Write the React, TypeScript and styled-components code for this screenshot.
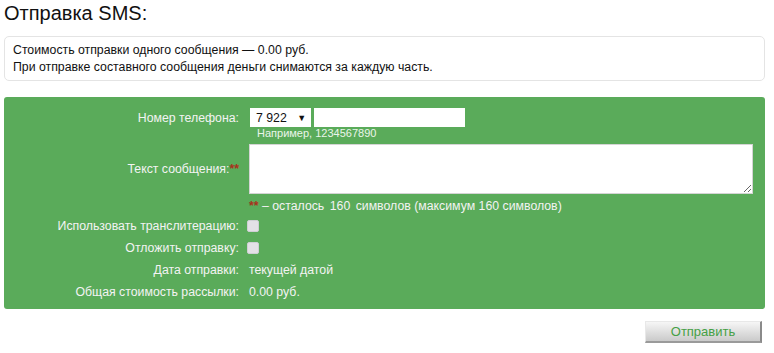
import React from "react";
import styled, { createGlobalStyle } from "styled-components";

const Global = createGlobalStyle`
  html, body { margin: 0; padding: 0; background: #fff; }
  body { font-family: "Liberation Sans", Arial, sans-serif; }
  * { box-sizing: border-box; }
`;

const Page = styled.div`
  width: 761px;
  margin-left: 4px;
  display: flex;
  flex-direction: column;
`;

const Title = styled.h1`
  margin: 0;
  padding-top: 1px;
  font-size: 20px;
  line-height: 24px;
  font-weight: normal;
  color: #111;
`;

const InfoBox = styled.div`
  margin-top: 11px;
  height: 45px;
  border: 1px solid #e4e4e4;
  border-radius: 5px;
  padding: 5px 8px 0 8px;
  font-size: 12.3px;
  line-height: 17px;
  color: #111;
`;

const Panel = styled.div`
  margin-top: 16px;
  background: #5aab5a;
  border-radius: 3px;
  padding: 11px 0 6px 0;
  color: #f3f3f3;
  font-size: 12.3px;
  display: flex;
  flex-direction: column;
`;

const Row = styled.div<{ $h?: number }>`
  display: flex;
  align-items: center;
  min-height: ${(p) => p.$h ?? 22}px;
`;

const Label = styled.div`
  width: 236px;
  text-align: right;
  padding-right: 1px;
  flex: none;
`;

const Value = styled.div<{ $gap?: number }>`
  margin-left: ${(p) => p.$gap ?? 9}px;
  display: flex;
  align-items: center;
  white-space: pre;
`;

const Stars = styled.span`
  color: #a8321d;
  font-weight: bold;
`;

const Num = styled.span`
  margin: 0 2px;
`;

const Select = styled.div`
  width: 61px;
  height: 19px;
  background: #fff;
  color: #111;
  font-size: 12.3px;
  display: flex;
  align-items: center;
  padding-left: 6px;
  gap: 7px;
`;

const Arrow = styled.span`
  font-size: 9px;
`;

const PhoneInput = styled.input`
  margin-left: 3px;
  width: 151px;
  height: 19px;
  border: none;
  background: #fff;
  padding: 0 4px;
  font-family: inherit;
`;

const Hint = styled.div`
  margin-left: 253px;
  font-size: 11px;
  line-height: 13px;
  color: #eaf5ea;
`;

const TextArea = styled.textarea`
  width: 504px;
  height: 50px;
  border: 1px solid #d4d4d4;
  background: #fff;
  display: block;
  resize: both;
  font-family: inherit;
`;

const Check = styled.span`
  display: inline-block;
  width: 12px;
  height: 12px;
  border-radius: 2px;
  background: #e3e1e6;
  border: 1px solid #cfcfd4;
`;

const Footer = styled.div`
  display: flex;
  justify-content: flex-end;
  padding: 12px 3px 0 0;
`;

const Button = styled.button`
  width: 117px;
  height: 22px;
  border: none;
  border-right: 2px solid #8a8a8a;
  border-bottom: 2px solid #9a9a9a;
  border-top: 1px solid #e8e8e8;
  border-left: 1px solid #e8e8e8;
  background: linear-gradient(#f6f6f6, #cacaca);
  color: #45a045;
  font-family: inherit;
  font-size: 13px;
  padding: 0;
`;

export default function App() {
  return (
    <>
      <Global />
      <Page>
        <Title>Отправка SMS:</Title>
        <InfoBox>
          Стоимость отправки одного сообщения — 0.00 руб.
          <br />
          При отправке составного сообщения деньги снимаются за каждую часть.
        </InfoBox>
        <Panel>
          <Row $h={19}>
            <Label>Номер телефона:</Label>
            <Value $gap={10}>
              <Select>
                7 922 <Arrow>▼</Arrow>
              </Select>
              <PhoneInput />
            </Value>
          </Row>
          <Hint>Например, 1234567890</Hint>
          <Row $h={54} style={{ paddingTop: 4 }}>
            <Label>
              Текст сообщения:<Stars>**</Stars>
            </Label>
            <Value $gap={9}>
              <TextArea />
            </Value>
          </Row>
          <Row $h={21} style={{ paddingTop: 3 }}>
            <Label />
            <Value $gap={9}>
              <Stars>**</Stars>
              {" – осталось "}
              <Num>160</Num>
              {" символов (максимум 160 символов)"}
            </Value>
          </Row>
          <Row>
            <Label>Использовать транслитерацию:</Label>
            <Value $gap={7}>
              <Check />
            </Value>
          </Row>
          <Row>
            <Label>Отложить отправку:</Label>
            <Value $gap={7}>
              <Check />
            </Value>
          </Row>
          <Row>
            <Label>Дата отправки:</Label>
            <Value $gap={9}>текущей датой</Value>
          </Row>
          <Row>
            <Label>Общая стоимость рассылки:</Label>
            <Value $gap={9}>0.00 руб.</Value>
          </Row>
        </Panel>
        <Footer>
          <Button>Отправить</Button>
        </Footer>
      </Page>
    </>
  );
}
